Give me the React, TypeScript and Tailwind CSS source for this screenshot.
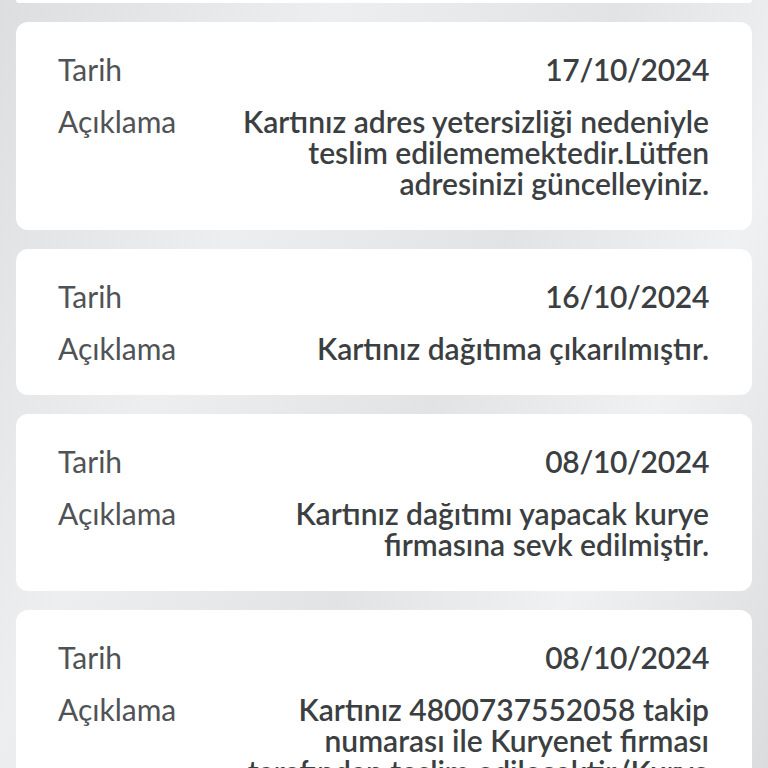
import React from 'react';

type Entry = {
  date: string;
  desc: string[];
};

const entries: Entry[] = [
  {
    date: '17/10/2024',
    desc: ['Kartınız adres yetersizliği nedeniyle', 'teslim edilememektedir.Lütfen', 'adresinizi güncelleyiniz.'],
  },
  { date: '16/10/2024', desc: ['Kartınız dağıtıma çıkarılmıştır.'] },
  { date: '08/10/2024', desc: ['Kartınız dağıtımı yapacak kurye', 'firmasına sevk edilmiştir.'] },
  {
    date: '08/10/2024',
    desc: ['Kartınız 4800737552058 takip', 'numarası ile Kuryenet firması', 'tarafından teslim edilecektir.(Kurye'],
  },
];

const App = () => {
  return (
    <div
      className="h-[768px] overflow-hidden bg-[#e3e5e7] bg-[linear-gradient(115deg,#dcdee0_0%,#eceef0_30%,#e1e3e5_55%,#f0f1f2_75%,#dadcde_100%)]"
      style={{ fontFamily: 'Lato, "Noto Sans", sans-serif' }}
    >
      <div className="flex flex-col gap-[19px] px-4">
        {/* tail of the previous card */}
        <div className="h-[3px] rounded-b-xl bg-white" />

        {entries.map((entry, i) => (
          <div key={i} className="rounded-xl bg-white pl-[42px] pr-[43px] pt-[32px] pb-[31px]">
            <div className="flex flex-col gap-[21px] text-[30px] leading-[31px]">
              <div className="flex items-start justify-between">
                <span className="text-[#505356]">Tarih</span>
                <span className="font-semibold tracking-[-0.3px] text-[#3c3f42]">{entry.date}</span>
              </div>
              <div className="flex items-start justify-between gap-6">
                <span className="shrink-0 text-[#505356]">Açıklama</span>
                <span className="text-right font-semibold text-[#3c3f42]">
                  {entry.desc.map((line, j) => (
                    <div key={j} className="whitespace-nowrap">{line}</div>
                  ))}
                </span>
              </div>
            </div>
          </div>
        ))}
      </div>
    </div>
  );
};

export default App;
